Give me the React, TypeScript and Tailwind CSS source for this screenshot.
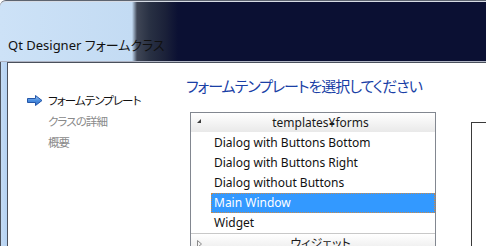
import React from "react";

const jp = "font-['Noto_Sans','Noto_Sans_CJK_JP',sans-serif]";

function NavArrow() {
  return (
    <svg width="16" height="11" viewBox="0 0 16 11" className="shrink-0">
      <defs>
        <linearGradient id="arr" x1="0" y1="0" x2="0" y2="1">
          <stop offset="0" stopColor="#9cc6f5" />
          <stop offset="0.5" stopColor="#4b8ee0" />
          <stop offset="1" stopColor="#2f6cc4" />
        </linearGradient>
      </defs>
      <path
        d="M0.5 3.5 H8.5 V0.5 L15 5.5 L8.5 10.5 V7.5 H0.5 Z"
        fill="url(#arr)"
        stroke="#2456a8"
        strokeWidth="1"
        strokeLinejoin="round"
      />
    </svg>
  );
}

function GroupHeader({ label, open }: { label: string; open: boolean }) {
  return (
    <div className="relative h-[19px] bg-gradient-to-b from-[#ffffff] to-[#e9e9e9] flex items-center justify-center pl-[15px]">
      <span className="absolute left-[5px] top-[5px]">
        {open ? (
          <svg width="6" height="6" viewBox="0 0 6 6">
            <path d="M5 1 L5 5 L1 5 Z" fill="#3c3c3c" />
          </svg>
        ) : (
          <svg width="7" height="10" viewBox="0 0 7 10">
            <path d="M1.5 1.5 L5.5 5 L1.5 8.5 Z" fill="none" stroke="#8a8a8a" />
          </svg>
        )}
      </span>
      <span className={`${jp} [font-feature-settings:'palt'] text-[12px] leading-[19px] text-[#1a1a1a]`}>{label}</span>
    </div>
  );
}

const templates = [
  "Dialog with Buttons Bottom",
  "Dialog with Buttons Right",
  "Dialog without Buttons",
  "Main Window",
  "Widget",
];

export default function App() {
  return (
    <div className={`w-[486px] h-[246px] overflow-hidden flex flex-col bg-white ${jp}`}>
      {/* title bar */}
      <div className="h-[62px] shrink-0 border-t border-[#5d6470] border-b border-b-[#aeb3c2] rounded-tl-[6px] shadow-[inset_0_1px_0_#d6dbe4] bg-[linear-gradient(to_right,#cde2f7_0px,#c3dbf3_132px,#404756_137px,#283043_150px,#1b2139_165px,#0b1033_178px,#0b1033_100%)] pl-[8px] pt-[31px]">
        <span className={`${jp} [font-feature-settings:'palt'] text-[13px] leading-[18px] text-[#111]`}>
          Qt Designer フォームクラス
        </span>
      </div>

      <div className="flex flex-1 min-h-0">
        {/* left window frame */}
        <div className="w-[7px] shrink-0 border-l border-[#4d535e] bg-gradient-to-r from-[#c4dbf4] to-[#b4d2f3]" />

        {/* client area */}
        <div className="flex-1 flex border-l border-t border-[#4a505c] bg-white">
          {/* wizard steps */}
          <div className="w-[178px] shrink-0 pl-[19px] pt-[27px] flex flex-col text-[11.5px] leading-[21px] tracking-[-0.9px] [font-feature-settings:'palt']">
            <div className="flex items-center gap-[5px] text-[#111]">
              <NavArrow />
              <span>フォームテンプレート</span>
            </div>
            <div className="pl-[21px] text-[#8a8a8a]">クラスの詳細</div>
            <div className="pl-[21px] text-[#8a8a8a]">概要</div>
          </div>

          {/* page */}
          <div className="flex-1 flex flex-col pt-[13px]">
            <div className="text-[15px] leading-[20px] text-[#1a3fa6] [font-feature-settings:'palt'] tracking-[-1px]">
              フォームテンプレートを選択してください
            </div>

            <div className="flex items-start mt-[16px]">
              <div className="ml-[4px] w-[246px] shrink-0 border border-[#828790] bg-white">
                <GroupHeader label="templates¥forms" open />
                <div className="pt-[1px]">
                  {templates.map((t) => {
                    const sel = t === "Main Window";
                    return (
                      <div
                        key={t}
                        className={`ml-[20px] h-[20px] pl-[2px] flex items-center text-[12px] ${
                          sel
                            ? "bg-[#3399ff] text-white border border-dotted border-[#c98a4a]"
                            : "text-[#111] border border-transparent"
                        }`}
                      >
                        {t}
                      </div>
                    );
                  })}
                </div>
                <div className="border-t border-[#c8c8c8]">
                  <GroupHeader label="ウィジェット" open={false} />
                </div>
              </div>

              {/* preview */}
              <div className="ml-[35px] mt-[10px] w-[40px] h-[140px] shrink-0 border border-[#3a3a3a] bg-white" />
            </div>
          </div>
        </div>
      </div>
    </div>
  );
}
